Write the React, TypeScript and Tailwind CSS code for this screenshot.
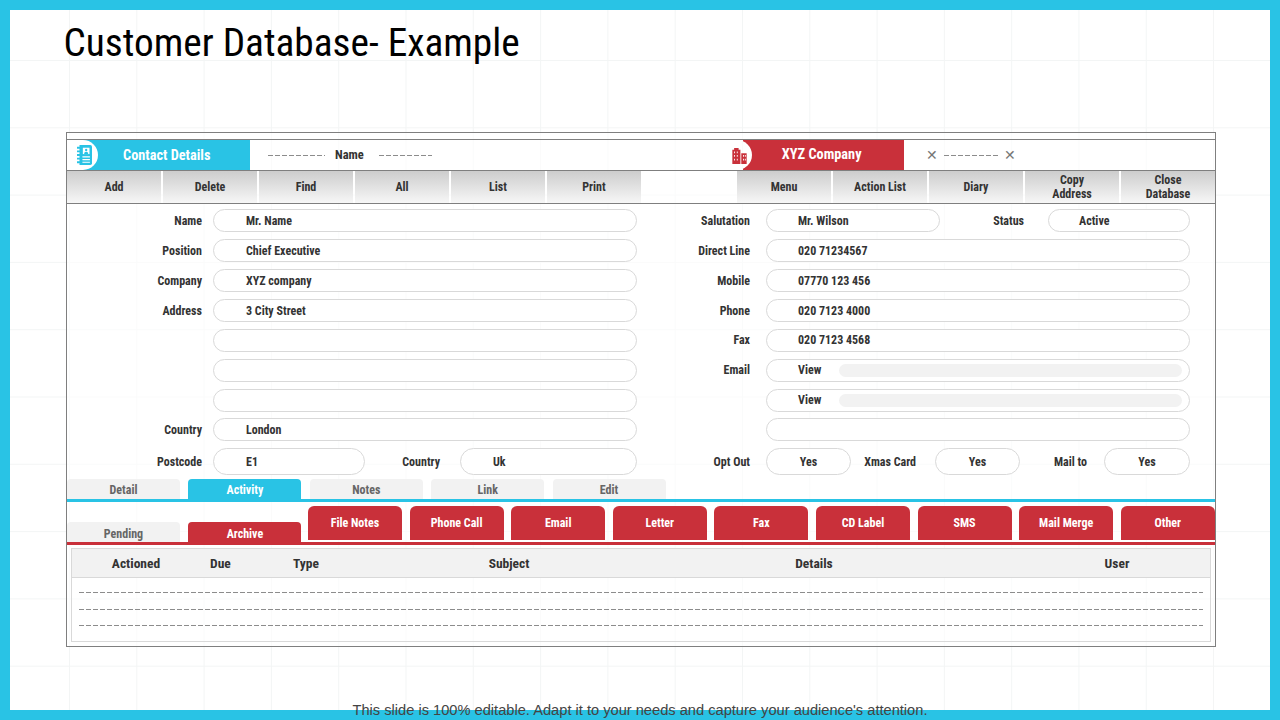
const leftTools = ['Add', 'Delete', 'Find', 'All', 'List', 'Print'];
const rightTools = ['Menu', 'Action List', 'Diary', 'Copy\nAddress', 'Close\nDatabase'];
const redButtons = ['File Notes', 'Phone Call', 'Email', 'Letter', 'Fax', 'CD Label', 'SMS', 'Mail Merge', 'Other'];
const upperTabs = ['Detail', 'Activity', 'Notes', 'Link', 'Edit'];

function ContactIcon() {
  return (
    <svg width="15" height="20" viewBox="0 0 18 22" preserveAspectRatio="none" className="shrink-0">
      <path d="M3 0h13a2 2 0 0 1 2 2v18a2 2 0 0 1-2 2H3z" fill="#29c3e5" />
      <path d="M0 3h5M0 7h5M0 11h5M0 15h5M0 19h5" stroke="#29c3e5" strokeWidth="2" />
      <rect x="7" y="3" width="8" height="7" fill="#fff" />
      <circle cx="11" cy="5.5" r="1.4" fill="#29c3e5" />
      <path d="M8.5 10a2.5 2.5 0 0 1 5 0z" fill="#29c3e5" />
      <path d="M6.5 13h9M6.5 16h9M6.5 19h9" stroke="#fff" strokeWidth="1.3" />
    </svg>
  );
}

function BuildingIcon() {
  return (
    <svg width="17" height="17" viewBox="0 0 18 19" className="relative z-10 shrink-0">
      <path d="M1 19V3h2V1h5v2h2v16z" fill="#c9303a" />
      <path d="M11 19V7h6v12z" fill="#c9303a" />
      <path
        d="M3 5h1v2H3zM6 5h1v2H6zM3 9h1v2H3zM6 9h1v2H6zM3 13h1v2H3zM6 13h1v2H6zM13 9h1v2h-1zM15 9h1v2h-1zM13 13h1v2h-1zM15 13h1v2h-1z"
        fill="#fff"
      />
    </svg>
  );
}

function Dashes({ className }: { className: string }) {
  return <div className={'h-px bg-[repeating-linear-gradient(to_right,#8c8c8c_0_5px,transparent_5px_7px)] ' + className} />;
}

function Label({ children, className = '' }: { children?: React.ReactNode; className?: string }) {
  return <span className={'text-right text-xs font-bold text-[#333] ' + className}>{children}</span>;
}

function Pill({ children, className = '' }: { children?: React.ReactNode; className?: string }) {
  return (
    <div className={'flex items-center rounded-full border border-[#d9d9d9] bg-white text-xs font-bold text-[#333] ' + className}>
      {children}
    </div>
  );
}

function LeftRow({ label, value, className = '' }: { label?: string; value?: string; className?: string }) {
  return (
    <div className={'flex h-[23px] items-center ' + className}>
      <Label className="w-[135px]">{label}</Label>
      <Pill className="ml-[11px] h-[23px] w-[424px] pl-8">{value}</Pill>
    </div>
  );
}

function RightRow({ label, value, bar, className = '' }: { label?: string; value?: string; bar?: boolean; className?: string }) {
  return (
    <div className={'flex h-[23px] items-center ' + className}>
      <Label className="w-[683px]">{label}</Label>
      <Pill className="ml-[16px] h-[23px] w-[424px] pl-[31px] pr-[7px]">
        <span className="w-[41px] shrink-0 whitespace-nowrap">{value}</span>
        {bar && <div className="h-[13px] flex-1 rounded-full bg-[#f2f2f2]" />}
      </Pill>
    </div>
  );
}

function ToolCell({ label }: { label: string }) {
  return (
    <div className="flex h-full w-[94px] items-center justify-center whitespace-pre-line bg-gradient-to-b from-[#cdcdcd] to-[#f7f7f7] text-center text-xs font-bold leading-[14px] text-[#333]">
      {label}
    </div>
  );
}

export default function App() {
  return (
    <div className="relative h-[720px] w-[1280px] border-[10px] border-[#29c3e5] bg-white bg-[linear-gradient(to_right,#f3f5f5_1px,transparent_1px),linear-gradient(to_bottom,#f3f5f5_1px,transparent_1px)] bg-[size:67.3px_67.3px] bg-[position:59px_50px] font-['Roboto',sans-serif] [font-stretch:75%]">
      <h1 className="ml-[53.5px] mt-[9px] h-[113px] text-[39.3px] font-normal leading-[48px] text-black">Customer Database- Example</h1>

      {/* Main form */}
      <div className="ml-[56px] h-[515px] w-[1150px] border border-[#7f7f7f] bg-white/60">
        <div className="h-[7px] border-b border-[#7f7f7f]" />

        {/* Header strip */}
        <div className="flex h-[31px] items-center border-b border-[#7f7f7f]">
          <div className="flex h-full w-[183px] items-center overflow-hidden bg-[#29c3e5]">
            <div className="flex h-full w-[31px] items-center justify-end rounded-r-full bg-white pr-[6px]">
              <ContactIcon />
            </div>
            <span className="ml-[25px] pt-[2px] text-[14.3px] font-bold text-white">Contact Details</span>
          </div>
          <Dashes className="ml-[18px] w-[57px]" />
          <span className="ml-[10px] text-[12.5px] font-bold text-[#333]">Name</span>
          <Dashes className="ml-[15px] w-[53px]" />
          <div className="ml-[299px] flex"><BuildingIcon /></div>
          <div className="-ml-[5px] flex h-full w-[161px] items-center overflow-hidden bg-[#c9303a]">
            <div className="-ml-[15px] h-full w-[24px] shrink-0 rounded-r-full bg-white" />
            <span className="ml-[30px] text-[14.3px] font-bold text-white">XYZ Company</span>
          </div>
          <span className="ml-[22px] text-sm leading-none text-[#777]">✕</span>
          <Dashes className="ml-[6px] w-[54px]" />
          <span className="ml-[6px] text-sm leading-none text-[#777]">✕</span>
        </div>

        {/* Toolbar */}
        <div className="flex h-[33px] items-stretch border-b border-[#7f7f7f]">
          <div className="flex gap-[2px]">
            {leftTools.map((t) => <ToolCell key={t} label={t} />)}
          </div>
          <div className="ml-[96px] flex gap-[2px]">
            {rightTools.map((t) => <ToolCell key={t} label={t} />)}
          </div>
        </div>

        {/* Fields */}
        <div className="grid grid-cols-1 pt-[5px]">
          <div className="col-start-1 row-start-1 flex flex-col gap-[7px]">
            <LeftRow label="Name" value="Mr. Name" />
            <LeftRow label="Position" value="Chief Executive" />
            <LeftRow label="Company" value="XYZ company" />
            <LeftRow label="Address" value="3 City Street" />
            <LeftRow className="-mt-[0.5px]" />
            <LeftRow />
            <LeftRow />
            <LeftRow label="Country" value="London" className="-mt-[0.5px]" />
            <div className="flex h-[27px] items-center">
              <Label className="w-[135px]">Postcode</Label>
              <Pill className="ml-[11px] h-[27px] w-[152px] pl-8">E1</Pill>
              <Label className="w-[75px]">Country</Label>
              <Pill className="ml-[20px] h-[27px] w-[177px] pl-8">Uk</Pill>
            </div>
          </div>
          <div className="pointer-events-none col-start-1 row-start-1 flex flex-col gap-[7px]">
            <div className="flex h-[23px] items-center">
              <Label className="w-[683px]">Salutation</Label>
              <Pill className="ml-[16px] h-[23px] w-[174px] pl-[31px]">Mr. Wilson</Pill>
              <Label className="w-[84px]">Status</Label>
              <Pill className="ml-[24px] h-[23px] w-[142px] pl-[30px]">Active</Pill>
            </div>
            <RightRow label="Direct Line" value="020 71234567" />
            <RightRow label="Mobile" value="07770 123 456" />
            <RightRow label="Phone" value="020 7123 4000" />
            <RightRow label="Fax" value="020 7123 4568" className="-mt-[0.5px]" />
            <RightRow label="Email" value="View" bar />
            <RightRow value="View" bar />
            <RightRow className="-mt-[0.5px]" />
            <div className="flex h-[27px] items-center">
              <Label className="w-[683px]">Opt Out</Label>
              <Pill className="ml-[16px] h-[27px] w-[85px] justify-center">Yes</Pill>
              <Label className="w-[65px]">Xmas Card</Label>
              <Pill className="ml-[19px] h-[27px] w-[85px] justify-center">Yes</Pill>
              <Label className="w-[67px]">Mail to</Label>
              <Pill className="ml-[17px] h-[27px] w-[86px] justify-center">Yes</Pill>
            </div>
          </div>
        </div>

        {/* Upper tabs */}
        <div className="mt-[4px] flex h-[23px] gap-[8.4px] border-b-[3px] border-[#29c3e5]">
          {upperTabs.map((t) => (
            <div
              key={t}
              className={
                t === 'Activity'
                  ? 'flex w-[113px] items-center justify-center rounded-t bg-[#29c3e5] pt-[2px] text-xs font-bold text-white'
                  : 'flex w-[113px] items-center justify-center rounded-t bg-[#f2f2f2] pt-[2px] text-xs font-bold text-[#666]'
              }
            >
              {t}
            </div>
          ))}
        </div>

        {/* Lower tabs and action buttons */}
        <div className="flex h-[43px] items-start border-b-[3px] border-[#c9303a]">
          <div className="mt-[20px] flex h-[20px] w-[113px] items-center justify-center rounded-t bg-[#f2f2f2] pt-[3px] text-xs font-bold text-[#666]">Pending</div>
          <div className="ml-[8.4px] mt-[20px] flex h-[20px] w-[113px] items-center justify-center rounded-t bg-[#c9303a] pt-[3px] text-xs font-bold text-white">Archive</div>
          <div className="ml-[6.6px] mt-[4px] flex gap-[7.6px]">
            {redButtons.map((t) => (
              <div key={t} className="flex h-[34px] w-[94px] items-center justify-center rounded-t-md bg-[#c9303a] text-xs font-bold text-white">{t}</div>
            ))}
          </div>
        </div>

        {/* Activity table */}
        <div className="mx-[4px] mt-[3px] h-[94px] border border-[#d9d9d9]">
          <div className="flex h-[29px] items-center border-b border-[#d9d9d9] bg-[#f2f2f2] text-[13.5px] font-bold text-[#333]">
            <span className="ml-[34px] w-[60px] text-center">Actioned</span>
            <span className="ml-[44px] w-[20px] text-center">Due</span>
            <span className="ml-[61px] w-[30px] text-center">Type</span>
            <span className="ml-[158px] w-[60px] text-center">Subject</span>
            <span className="ml-[245px] w-[60px] text-center">Details</span>
            <span className="ml-[243px] w-[60px] text-center">User</span>
          </div>
          <div className="mx-[7px] mt-[14px] flex flex-col gap-[15.5px]">
            <Dashes className="w-full" />
            <Dashes className="w-full" />
            <Dashes className="w-full" />
          </div>
        </div>
      </div>

      {/* Footer note sits over the frame */}
      <p className="absolute bottom-[-10px] left-0 right-0 text-center font-['Liberation_Sans',sans-serif] text-[14.65px] leading-5 text-[#444] [font-stretch:100%]">
        This slide is 100% editable. Adapt it to your needs and capture your audience's attention.
      </p>
    </div>
  );
}
